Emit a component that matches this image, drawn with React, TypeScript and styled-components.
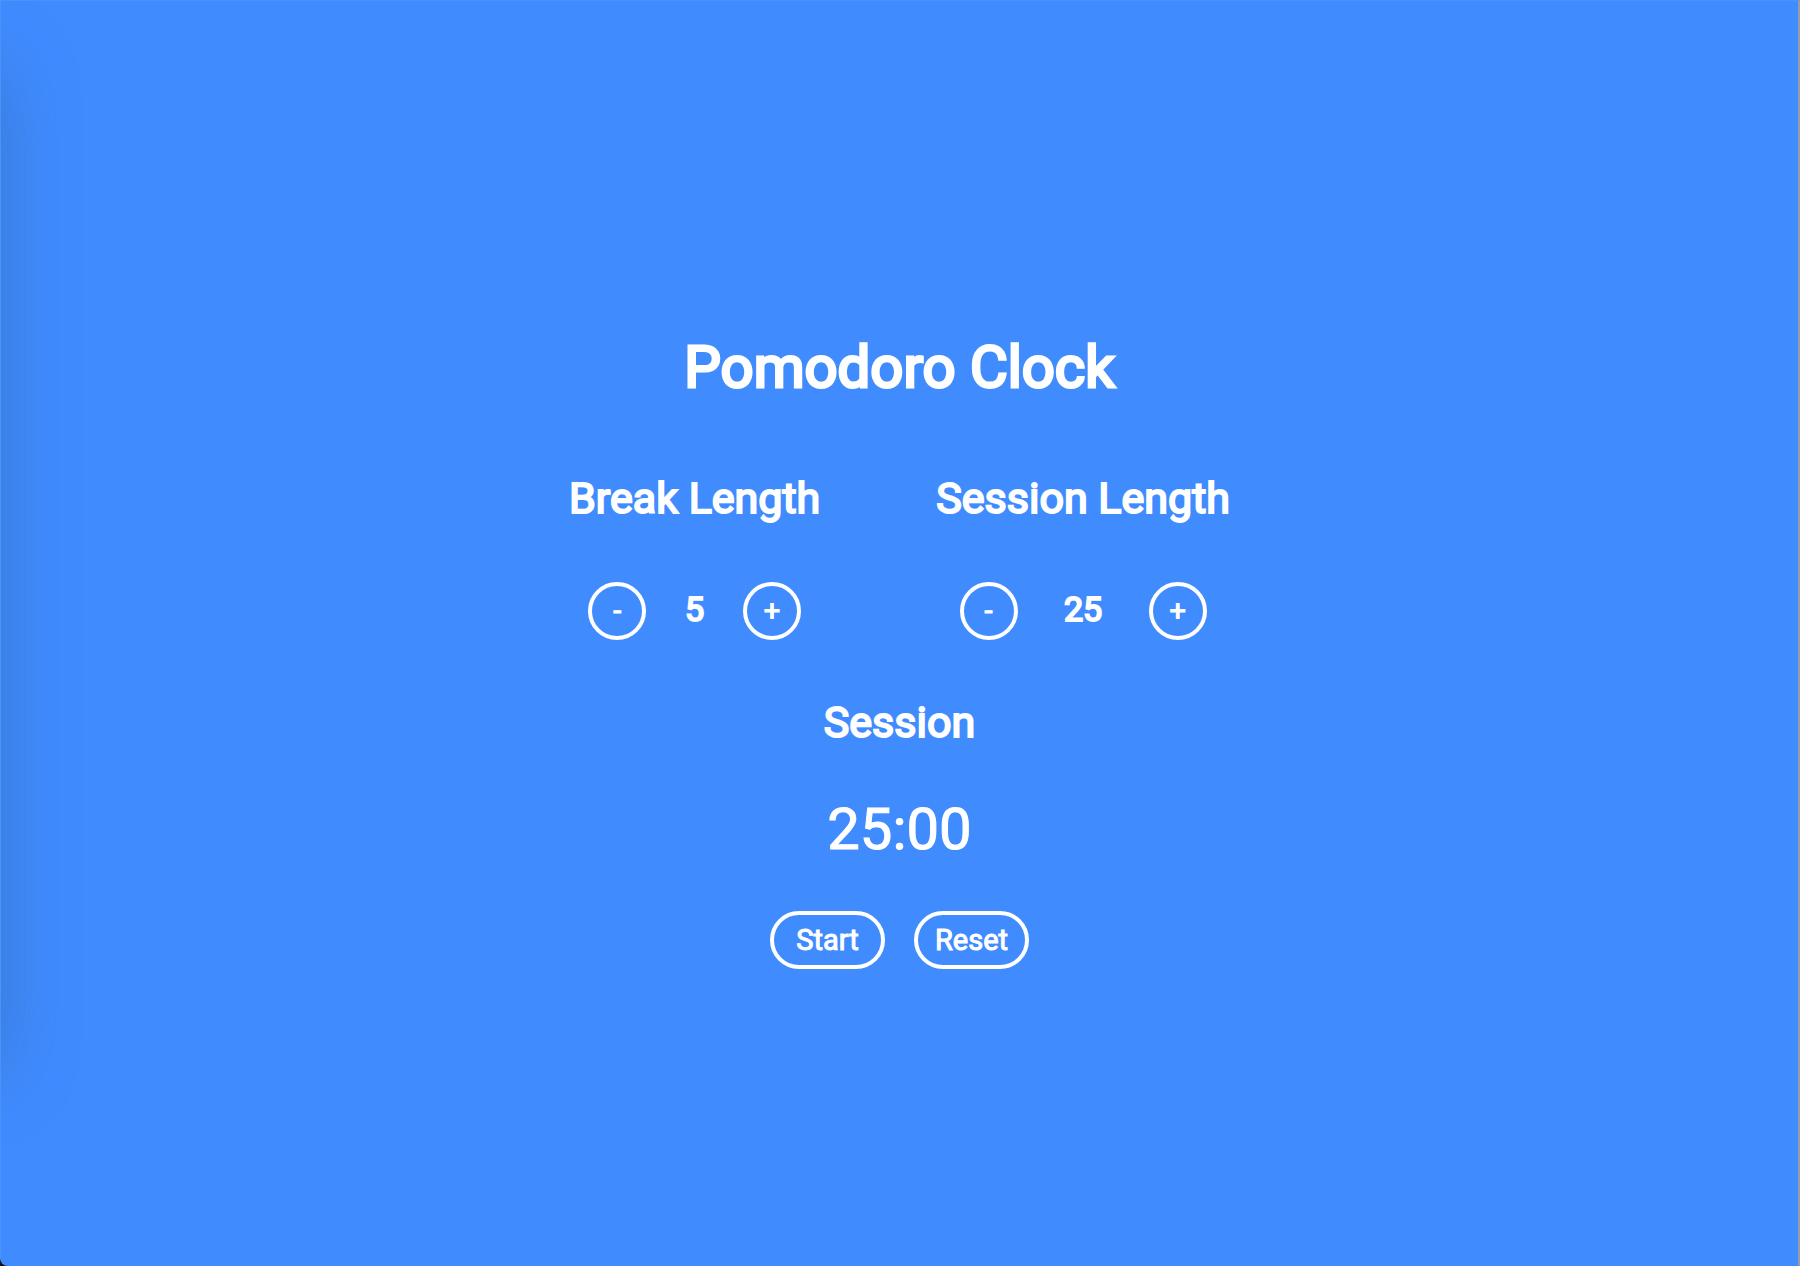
import React, { useEffect, useState } from 'react';
import styled, { createGlobalStyle } from 'styled-components';

const BLUE = '#408cff';

const GlobalStyle = createGlobalStyle`
  * { box-sizing: border-box; }
  body {
    margin: 0;
    background: #111;
    color: #fff;
    font-family: Roboto, 'Noto Sans', sans-serif;
  }
`;

const Page = styled.main`
  position: relative;
  overflow: hidden;
  min-height: 100vh;
  padding-top: 34px;
  display: flex;
  flex-direction: column;
  align-items: center;
  justify-content: center;
  background: ${BLUE};
  border-top: 1px solid #4a93fd;
  border-left: 1px solid #4a93fd;
  border-right: 2px solid #989ca6;
  border-bottom-left-radius: 8px;
`;

const WindowShadow = styled.div`
  position: absolute;
  top: 68px;
  bottom: 196px;
  right: 100%;
  width: 100px;
  box-shadow: 0 0 76px rgba(40, 80, 120, 0.34);
`;

const Title = styled.h1`
  margin: 0;
  font-size: 58px;
  line-height: 68px;
  font-weight: 400;
  -webkit-text-stroke: 3px #fff;
`;

const Heading = styled.h2`
  margin: 0;
  font-size: 43px;
  line-height: 52px;
  font-weight: 400;
  -webkit-text-stroke: 2px #fff;
`;

const Lengths = styled.div`
  display: flex;
  gap: 116px;
  margin: 71px 0 56px;
`;

const Column = styled.section`
  display: flex;
  flex-direction: column;
  gap: 58px;
`;

const Stepper = styled.div`
  display: flex;
  justify-content: space-around;
  align-items: baseline;
`;

const Count = styled.output`
  font-size: 34px;
  line-height: 40px;
  font-weight: 400;
  -webkit-text-stroke: 2px #fff;
`;

const Button = styled.button<{ $round?: boolean }>`
  width: ${(p) => (p.$round ? 58 : 115)}px;
  height: 58px;
  padding: 0;
  border: 4px solid #fff;
  border-radius: 29px;
  background: transparent;
  color: inherit;
  font-family: inherit;
  font-size: 29px;
  line-height: 34px;
  -webkit-text-stroke: 1px #fff;
  cursor: pointer;
`;

const Time = styled.time`
  margin: 47px 0 48px;
  font-size: 58px;
  line-height: 68px;
  -webkit-text-stroke: 1px #fff;
`;

const Actions = styled.div`
  display: flex;
  gap: 29px;
`;

type LengthProps = { title: string; value: number; onChange: (value: number) => void };

function LengthControl({ title, value, onChange }: LengthProps) {
  return (
    <Column>
      <Heading>{title}</Heading>
      <Stepper>
        <Button $round aria-label={`Decrease ${title}`} onClick={() => onChange(Math.max(1, value - 1))}>-</Button>
        <Count aria-label={title}>{value}</Count>
        <Button $round aria-label={`Increase ${title}`} onClick={() => onChange(Math.min(60, value + 1))}>+</Button>
      </Stepper>
    </Column>
  );
}

const pad = (n: number) => String(n).padStart(2, '0');

export default function App() {
  const [breakLength, setBreakLength] = useState(5);
  const [sessionLength, setSessionLength] = useState(25);
  const [onBreak, setOnBreak] = useState(false);
  const [seconds, setSeconds] = useState(25 * 60);
  const [running, setRunning] = useState(false);

  useEffect(() => {
    if (!running) return;
    const id = setTimeout(() => {
      if (seconds > 0) {
        setSeconds(seconds - 1);
      } else {
        setSeconds((onBreak ? sessionLength : breakLength) * 60);
        setOnBreak(!onBreak);
      }
    }, 1000);
    return () => clearTimeout(id);
  }, [running, seconds, onBreak, breakLength, sessionLength]);

  const changeBreak = (value: number) => {
    setBreakLength(value);
    if (!running && onBreak) setSeconds(value * 60);
  };

  const changeSession = (value: number) => {
    setSessionLength(value);
    if (!running && !onBreak) setSeconds(value * 60);
  };

  const reset = () => {
    setRunning(false);
    setOnBreak(false);
    setBreakLength(5);
    setSessionLength(25);
    setSeconds(25 * 60);
  };

  return (
    <>
      <GlobalStyle />
      <Page>
        <WindowShadow aria-hidden />
        <Title>Pomodoro Clock</Title>
        <Lengths>
          <LengthControl title="Break Length" value={breakLength} onChange={changeBreak} />
          <LengthControl title="Session Length" value={sessionLength} onChange={changeSession} />
        </Lengths>
        <Heading>{onBreak ? 'Break' : 'Session'}</Heading>
        <Time>{pad(Math.floor(seconds / 60))}:{pad(seconds % 60)}</Time>
        <Actions>
          <Button onClick={() => setRunning(!running)}>{running ? 'Pause' : 'Start'}</Button>
          <Button onClick={reset}>Reset</Button>
        </Actions>
      </Page>
    </>
  );
}
